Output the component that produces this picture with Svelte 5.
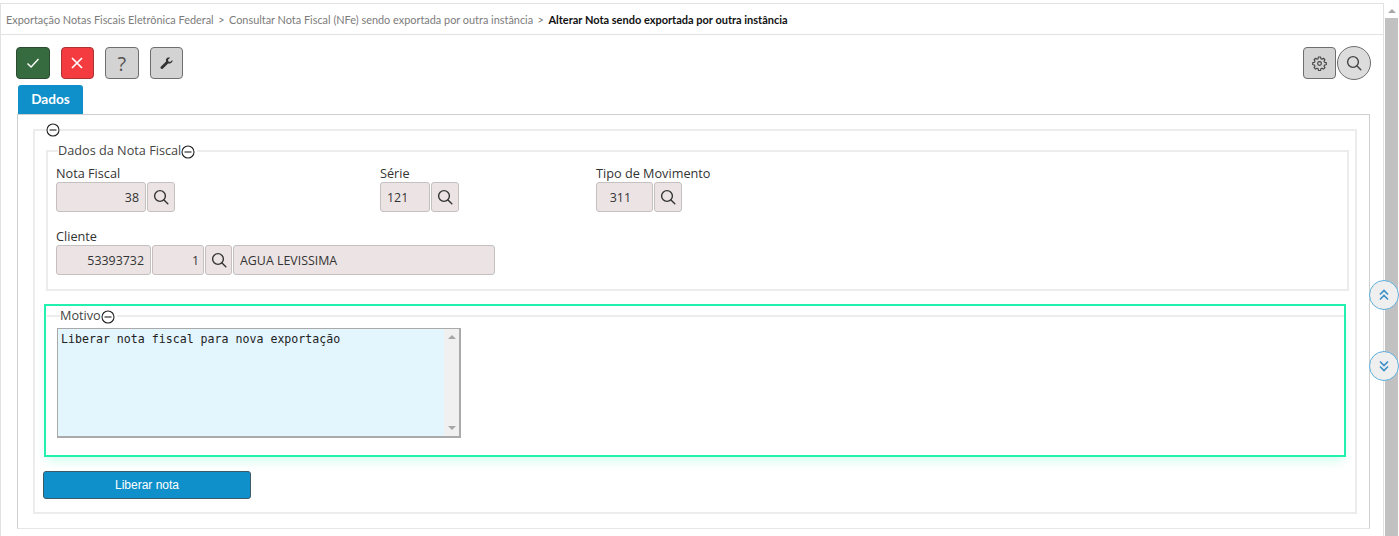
<script lang="ts">
  const fields = [
    { label: 'Nota Fiscal', value: '38', width: 90, gap: 205, pad: 6 },
    { label: 'Série', value: '121', width: 50, gap: 137, pad: 23 },
    { label: 'Tipo de Movimento', value: '311', width: 57, gap: 0, pad: 21 }
  ];
</script>

{#snippet search()}
  <svg class="icon" viewBox="0 0 16 16" width="16" height="16" fill="none" stroke="currentColor" stroke-width="1.4" stroke-linecap="round">
    <circle cx="7" cy="7" r="5.4" />
    <path d="M11 11l3.8 3.8" />
  </svg>
{/snippet}

{#snippet minus()}
  <svg class="minus" viewBox="0 0 14 14" width="14" height="14" fill="none" stroke="#222" stroke-width="1.1">
    <circle cx="7" cy="7" r="6" />
    <path d="M3.5 7h7" />
  </svg>
{/snippet}

<div class="page">
  <main class="content">
    <nav class="crumbs">
      <span>Exportação Notas Fiscais Eletrônica Federal</span>
      <i>&gt;</i>
      <span>Consultar Nota Fiscal (NFe) sendo exportada por outra instância</span>
      <i>&gt;</i>
      <b>Alterar Nota sendo exportada por outra instância</b>
    </nav>

    <div class="toolbar">
      <button class="tool ok" aria-label="Confirmar">
        <svg viewBox="0 0 16 16" width="16" height="16" fill="none" stroke="#fff" stroke-width="1.4"><path d="M2.5 8.500l3.600 3.600 7.400-8" /></svg>
      </button>
      <button class="tool cancel" aria-label="Cancelar">
        <svg viewBox="0 0 16 16" width="16" height="16" fill="none" stroke="#fff" stroke-width="1.700"><path d="M3 3l10 10M13 3L3 13" /></svg>
      </button>
      <button class="tool help">?</button>
      <button class="tool" aria-label="Ferramentas">
        <svg viewBox="0 0 16 16" width="13" height="13" fill="#333"><path d="M15.200 3.600l-2.600 2.500-2.300-.5-.5-2.300L12.400.8C10.600.1 8.700.600 7.800 2c-.7 1.100-.7 2.300-.3 3.400L1.200 11.700c-.8.800-.8 1.900-.1 2.600.7.700 1.800.7 2.600-.1l6.300-6.300c1.100.4 2.400.3 3.400-.4 1.400-.9 2.500-2.500 1.800-3.900z" /></svg>
      </button>
      <span class="spacer"></span>
      <button class="tool" aria-label="Configurações">
        <svg viewBox="0 0 24 24" width="15" height="15" fill="none" stroke="#444" stroke-width="1.800" stroke-linejoin="round">
          <path d="M10.300 2.500h3.400l.5 2.800 1.700.8 2.400-1.500 2.400 2.400-1.500 2.400.8 1.700 2.800.5v3.400l-2.800.5-.8 1.700 1.500 2.400-2.400 2.400-2.400-1.500-1.700.8-.5 2.800h-3.400l-.5-2.800-1.700-.8-2.400 1.500-2.400-2.400 1.500-2.400-.8-1.700-2.800-.5v-3.400l2.800-.5.8-1.700-1.500-2.400 2.400-2.400 2.400 1.500 1.700-.8z" transform="translate(0 -1)" />
          <circle cx="12" cy="12" r="3" />
        </svg>
      </button>
      <button class="tool round" aria-label="Pesquisar">{@render search()}</button>
    </div>

    <div class="tabs"><span class="tab">Dados</span></div>

    <section class="panel">
      <fieldset class="outer">
        <legend class="bare">{@render minus()}</legend>

        <fieldset class="group nota">
          <legend>Dados da Nota Fiscal{@render minus()}</legend>
          <div class="row">
            {#each fields as f}
              <div class="field" style="margin-right: {f.gap}px">
                <label for={f.label}>{f.label}</label>
                <div class="inputs">
                  <input id={f.label} class="num" readonly value={f.value} style="width: {f.width}px; padding-right: {f.pad}px" />
                  <button class="lookup" aria-label="Pesquisar">{@render search()}</button>
                </div>
              </div>
            {/each}
          </div>
          <div class="field client">
            <label for="cliente">Cliente</label>
            <div class="inputs">
              <input id="cliente" class="num" readonly value="53393732" style="width: 95px" />
              <input class="num" readonly value="1" style="width: 52px; padding-right: 4px" />
              <button class="lookup narrow" aria-label="Pesquisar">{@render search()}</button>
              <input class="name" readonly value="AGUA LEVISSIMA" style="width: 262px" />
            </div>
          </div>
        </fieldset>

        <div class="focus">
          <fieldset class="group motivo">
            <legend>Motivo{@render minus()}</legend>
            <div class="memo">
              <textarea readonly>Liberar nota fiscal para nova exportação</textarea>
              <div class="memo-bar"><span class="up"></span><span class="down"></span></div>
            </div>
          </fieldset>
        </div>

        <button class="submit">Liberar nota</button>
      </fieldset>
    </section>
  </main>

  <div class="scrollbar"><span class="arrow"></span><span class="thumb"></span></div>

  <button class="float up-btn" aria-label="Subir">
    <svg viewBox="0 0 14 14" width="14" height="14" fill="none" stroke="#3a8fc9" stroke-width="1.6"><path d="M3 6.500l4-4 4 4M3 11.500l4-4 4 4" /></svg>
  </button>
  <button class="float down-btn" aria-label="Descer">
    <svg viewBox="0 0 14 14" width="14" height="14" fill="none" stroke="#3a8fc9" stroke-width="1.6"><path d="M3 2.500l4 4 4-4M3 7.500l4 4 4-4" /></svg>
  </button>
</div>

<style>
  :global(body) {
    margin: 0;
    background: #fff;
  }

  .page {
    position: relative;
    display: flex;
    height: 536px;
    overflow: hidden;
    font-family: Lato, "Open Sans", sans-serif;
    color: #333;
  }

  button {
    font-family: inherit;
    cursor: pointer;
    padding: 0;
  }

  .content {
    flex: 1;
    min-width: 0;
    margin-top: 3px;
    border-top: 1px solid #e2e2e2;
    border-left: 1px solid #e2e2e2;
    border-right: 1px solid #e2e2e2;
  }

  .crumbs {
    display: flex;
    align-items: center;
    gap: 4.5px;
    height: 30px;
    padding-left: 5px;
    border-bottom: 1px solid #e2e2e2;
    font-size: 10.9px;
    color: #7c7c7c;
    white-space: nowrap;
  }

  .crumbs i {
    font-style: normal;
  }

  .crumbs b {
    color: #111;
    font-size: 11px;
    font-weight: 700;
  }

  .toolbar {
    display: flex;
    align-items: center;
    gap: 11px;
    padding: 11px 12px 0 15px;
  }

  .spacer {
    flex: 1;
  }

  .tool {
    display: flex;
    align-items: center;
    justify-content: center;
    box-sizing: border-box;
    width: 33.5px;
    height: 32px;
    border: 1.5px solid #6e6e6e;
    border-radius: 4px;
    background: #d3d3d3;
    color: #444;
    font-family: "Open Sans", sans-serif;
    font-size: 19px;
  }

  .tool.help {
    color: #555;
    font-size: 20px;
    font-weight: 400;
  }

  .tool.ok {
    background: #366b40;
    border-color: #2c4a32;
  }

  .tool.cancel {
    background: #f43b3f;
    border-color: #a33;
  }

  .tool.round {
    width: 34px;
    height: 34px;
    margin-left: -10px;
    border-radius: 50%;
    background: #dcdcdc;
  }

  .tabs {
    padding: 5px 0 0 17px;
  }

  .tab {
    display: block;
    width: 65px;
    height: 29px;
    border-radius: 3px 3px 0 0;
    background: #0f90cb;
    color: #fff;
    font-size: 13.6px;
    font-weight: 700;
    line-height: 29px;
    text-align: center;
  }

  .panel {
    box-sizing: border-box;
    width: 1353px;
    height: 415px;
    margin-left: 16px;
    padding: 8px 12px 0 15px;
    border: 1px solid #cfcfcf;
    border-bottom-color: #e6e6e6;
  }

  fieldset {
    margin: 0;
    min-width: 0;
    border: 2px solid #ececec;
  }

  legend {
    display: flex;
    align-items: center;
    padding: 0;
    font-family: "Open Sans", sans-serif;
    font-size: 12.7px;
    line-height: 17px;
    color: #444;
  }

  .minus {
    display: block;
    flex: none;
  }

  .group .minus {
    transform: translateY(1px);
  }

  .outer {
    box-sizing: border-box;
    height: 391px;
    padding: 5px 6px 0 9px;
  }

  .bare {
    margin-left: 2px;
  }

  .group legend {
    margin-left: 2px;
    padding-right: 2px;
  }

  .nota {
    box-sizing: border-box;
    height: 149px;
    margin: 0 0 0 2px;
    padding: 0 0 0 8px;
  }

  .row {
    display: flex;
  }

  .field label {
    display: block;
    font-family: "Open Sans", sans-serif;
    font-size: 12.7px;
    line-height: 17px;
    color: #333;
  }

  .field {
    margin-top: 6px;
  }

  .field.client {
    margin-top: 16px;
  }

  .inputs {
    display: flex;
    gap: 1px;
  }

  input {
    box-sizing: border-box;
    height: 30px;
    padding: 0 6px;
    border: 1px solid #c4c0c0;
    border-radius: 3px;
    background: #ece4e4;
    font-family: "Open Sans", sans-serif;
    font-size: 12.4px;
    color: #333;
    outline: none;
  }

  .num {
    text-align: right;
  }

  .lookup {
    display: flex;
    align-items: center;
    justify-content: center;
    box-sizing: border-box;
    width: 28px;
    height: 30px;
    border: 1px solid #c4c0c0;
    border-radius: 3px;
    background: #ece4e4;
    color: #333;
  }

  .lookup.narrow {
    width: 27px;
  }

  .focus {
    box-sizing: border-box;
    width: 1302px;
    height: 153px;
    margin-top: 13px;
    padding: 1px 0 0 1px;
    border: 2px solid #22f0ae;
    box-shadow: 0 7px 10px -3px rgba(34, 240, 174, 0.2);
  }

  .motivo {
    border-right: 0;
    border-bottom: 0;
    border-left: 0;
    height: 140px;
    padding: 4px 0 0 10px;
  }

  .motivo legend {
    margin-left: 3px;
  }

  .memo {
    display: flex;
    box-sizing: border-box;
    width: 404px;
    height: 110px;
    border: 2px solid #aaa;
    border-width: 1px 2px 2px 1px;
    background: #e3f5fd;
  }

  textarea {
    flex: 1;
    padding: 3px;
    border: 0;
    background: transparent;
    font-family: "DejaVu Sans Mono", monospace;
    font-size: 11.6px;
    line-height: 14px;
    color: #222;
    resize: none;
    outline: none;
  }

  .memo-bar {
    display: flex;
    flex-direction: column;
    justify-content: space-between;
    align-items: center;
    width: 15px;
    padding: 6px 0;
    box-sizing: border-box;
    background: #f0f0f0;
  }

  .up,
  .down {
    width: 0;
    height: 0;
    border-left: 4px solid transparent;
    border-right: 4px solid transparent;
  }

  .up {
    border-bottom: 4px solid #a6a6a6;
  }

  .down {
    border-top: 4px solid #a6a6a6;
  }

  .submit {
    display: block;
    box-sizing: border-box;
    width: 208px;
    height: 28px;
    margin: 14px 0 0 -1px;
    border: 1px solid #3d5a6c;
    border-radius: 3px;
    background: #0f90cb;
    color: #fff;
    font-family: "Liberation Sans", Arial, sans-serif;
    font-size: 12px;
  }

  .scrollbar {
    display: flex;
    flex-direction: column;
    align-items: center;
    flex: none;
    width: 15px;
    margin-top: 3px;
    background: #fff;
  }

  .arrow {
    width: 0;
    height: 0;
    margin-top: 6px;
    border-left: 4px solid transparent;
    border-right: 4px solid transparent;
    border-bottom: 4px solid #a6a6a6;
  }

  .thumb {
    flex: 1;
    width: 13px;
    margin-top: 5px;
    background: #c1c1c1;
  }

  .float {
    position: absolute;
    left: 1369px;
    display: flex;
    align-items: center;
    justify-content: center;
    width: 30px;
    height: 30px;
    border: 1.5px solid #5fb0dc;
    border-radius: 50%;
    background: #efefef;
  }

  .up-btn {
    top: 280px;
  }

  .down-btn {
    top: 351px;
  }
</style>
